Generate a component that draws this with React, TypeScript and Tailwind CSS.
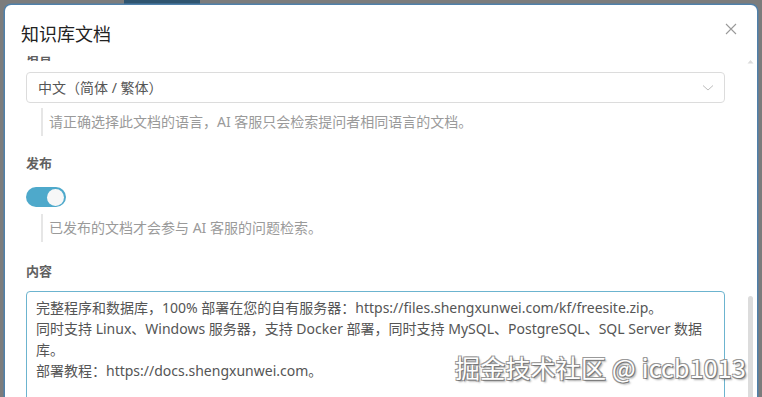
import React from "react";

const font = { fontFamily: '"Noto Sans", "Noto Sans CJK SC", sans-serif' };

function Help({ children }: { children: React.ReactNode }) {
  return (
    <div className="ml-[15px] border-l-2 border-[#e6e6e6] pl-[6px] py-[4px] text-[14px] leading-[20px] text-[#9a9a9a]">
      {children}
    </div>
  );
}

function Label({ children, className = "" }: { children: React.ReactNode; className?: string }) {
  return <div className={"text-[13px] leading-[20px] font-bold text-[#606060] " + className}>{children}</div>;
}

export default function App() {
  return (
    <div className="relative w-[762px] h-[397px] overflow-hidden bg-[#7c7c7c] flex flex-col pt-[5px] pl-[5px] pr-[5px]" style={font}>
      {/* backdrop strip peeking above dialog */}
      <div className="absolute left-[124px] top-0 w-[76px] h-[4px] bg-[#2f5570]" />
      {/* dialog */}
      <div className="relative flex-1 min-h-0 bg-white rounded-t-[6px] flex flex-col overflow-hidden shadow-[0_0_0_1.5px_#4f80aa]">
        <div className="h-[51px] shrink-0 flex items-center justify-between pl-[16px] pr-[17px]">
          <div className="text-[18px] leading-[24px] text-[#222] mt-[6px]">知识库文档</div>
          <svg width="12" height="12" viewBox="0 0 12 12" className="mt-[-4px] mr-[3px]">
            <path d="M1 1 L11 11 M11 1 L1 11" stroke="#9a9a9a" strokeWidth="1.1" />
          </svg>
        </div>
        <div className="flex-1 min-h-0 flex">
          <div className="flex-1 min-w-0 overflow-hidden">
            <div className="mt-[-12px] pl-[21px] pr-[22px]">
              <Label className="mb-[8px]">语言</Label>
              <div className="h-[31px] border border-[#dcdcdc] rounded-[4px] flex items-center justify-between pl-[11px] pr-[10px]">
                <span className="text-[14px] text-[#555]">中文（简体 / 繁体）</span>
                <svg width="12" height="8" viewBox="0 0 12 8">
                  <path d="M1 1.5 L6 6 L11 1.5" fill="none" stroke="#bdbdbd" strokeWidth="1" />
                </svg>
              </div>
              <div className="mt-[5px]">
                <Help>请正确选择此文档的语言，AI 客服只会检索提问者相同语言的文档。</Help>
              </div>
              <Label className="mt-[17px]">发布</Label>
              <div className="h-[32px] mt-[8px] flex items-center">
                <div className="w-[40px] h-[20px] rounded-full bg-[#4ea9cb] flex items-center justify-end pr-[2px]">
                  <div className="w-[17px] h-[17px] rounded-full bg-[#f7f7f7]" />
                </div>
              </div>
              <div className="mt-[1px]">
                <Help>已发布的文档才会参与 AI 客服的问题检索。</Help>
              </div>
              <Label className="mt-[19px] mb-[10px]">内容</Label>
              <div className="h-[140px] border border-[#6cb4cf] rounded-[4px] pl-[9px] pr-[10px] pt-[5px] text-[14px] leading-[21px] text-[#555]">
                完整程序和数据库，100% 部署在您的自有服务器：https://files.shengxunwei.com/kf/freesite.zip。
                <br />
                同时支持 Linux、Windows 服务器，支持 Docker 部署，同时支持 MySQL、PostgreSQL、SQL Server 数据库。
                <br />
                部署教程：https://docs.shengxunwei.com。
              </div>
            </div>
          </div>
          {/* scrollbar */}
          <div className="w-[7px] mr-[3px] shrink-0 flex flex-col">
            <svg width="7" height="5" viewBox="0 0 7 5" className="mt-[3px]">
              <path d="M0.5 4.5 L3.5 1 L6.5 4.5 Z" fill="#dcdcdc" />
            </svg>
            <div className="flex-1" />
            <div className="h-[101px] mx-[1px] rounded-t-[3px] bg-[#dcdcdc]" />
          </div>
        </div>
      </div>
      {/* watermark overlay */}
      <div
        className="absolute left-[455px] top-[351px] text-[25px] leading-[32px] tracking-[0.2px] text-white whitespace-nowrap"
        style={{
          fontFamily: '"Noto Sans CJK SC", sans-serif',
          textShadow:
            "1px 1px 0 #777, -1px -1px 0 #999, 1px -1px 0 #999, -1px 1px 0 #999, 2px 2px 2px rgba(0,0,0,0.35)",
        }}
      >
        掘金技术社区 @ iccb1013
      </div>
    </div>
  );
}
